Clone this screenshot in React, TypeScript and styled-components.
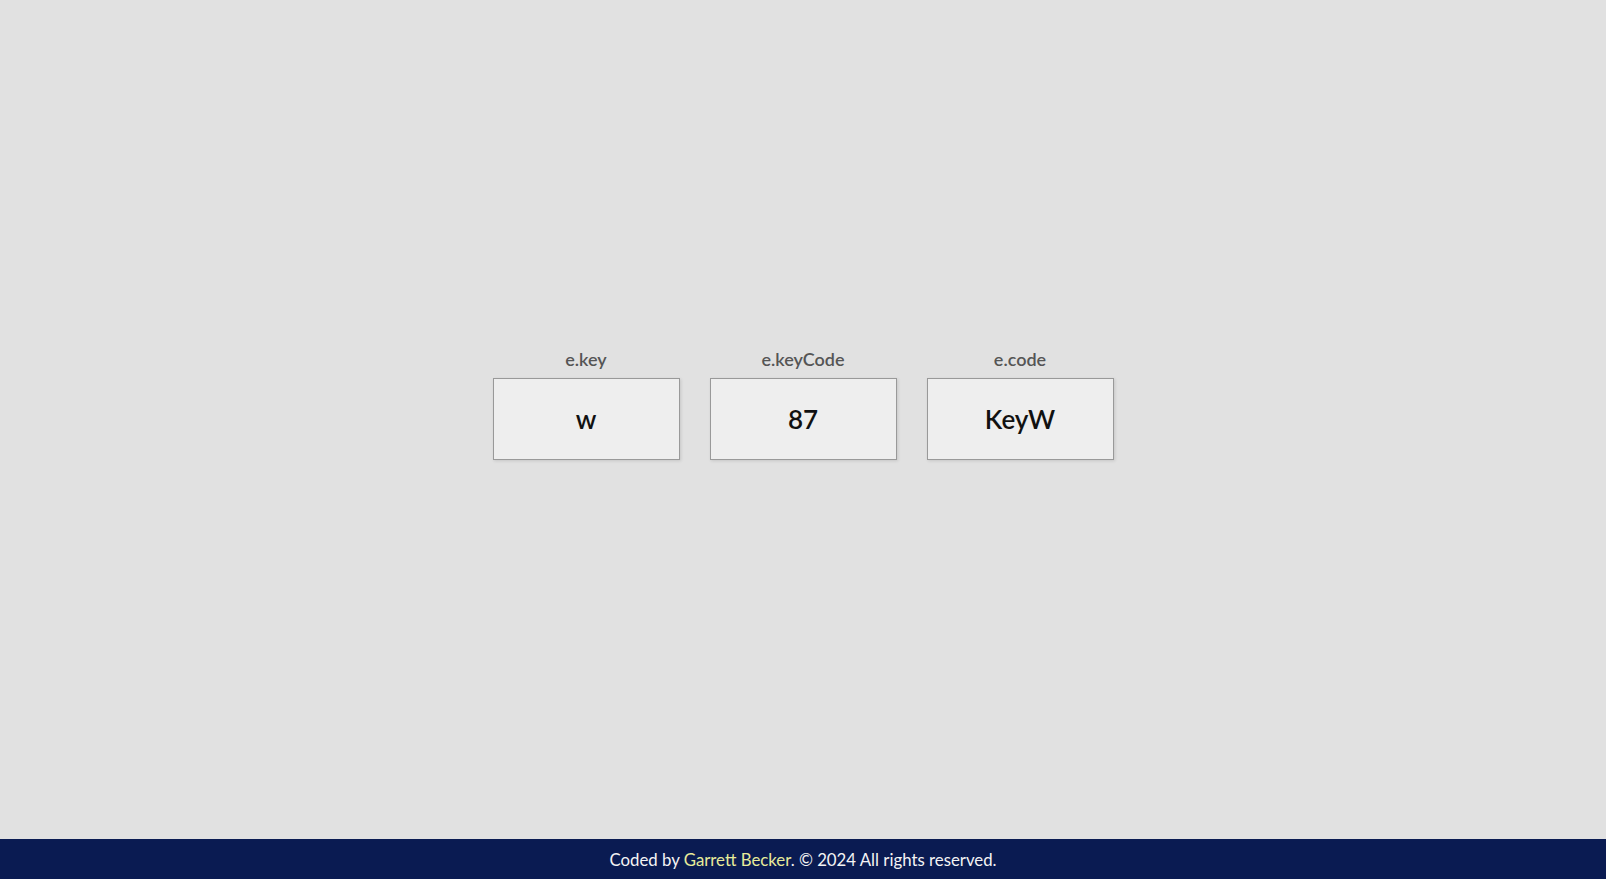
import React from "react";
import styled, { createGlobalStyle } from "styled-components";

const GlobalStyle = createGlobalStyle`
  html, body { margin: 0; padding: 0; height: 100%; }
  body {
    background: #e1e1e1;
    font-family: "Lato", "Noto Sans", sans-serif;
  }
  #root { height: 100%; }
`;

const Page = styled.div`
  display: flex;
  flex-direction: column;
  height: 100vh;
`;

const Main = styled.main`
  flex: 1;
  display: flex;
  align-items: center;
  justify-content: center;
  padding-bottom: 31px;
`;

const Row = styled.div`
  display: flex;
  gap: 30px;
`;

const Column = styled.div`
  display: flex;
  flex-direction: column;
  align-items: center;
  gap: 8px;
`;

const Label = styled.div`
  font-size: 18px;
  font-weight: 600;
  color: #555;
  line-height: 22px;
`;

const Box = styled.div`
  width: 185px;
  height: 80px;
  box-sizing: content-box;
  border: 1px solid #999;
  background: #eeeeee;
  box-shadow: 1px 1px 3px rgba(0, 0, 0, 0.12);
  display: flex;
  align-items: center;
  justify-content: center;
  font-size: 26px;
  font-weight: 600;
  color: #111;
`;

const Footer = styled.footer`
  height: 40px;
  background: #0a1b52;
  color: #f4f4f4;
  display: flex;
  align-items: center;
  justify-content: center;
  font-size: 16.8px;
`;

const Link = styled.a`
  color: #e8ec9a;
  text-decoration: none;
`;

const items = [
  { label: "e.key", value: "w" },
  { label: "e.keyCode", value: "87" },
  { label: "e.code", value: "KeyW" },
];

export default function App() {
  return (
    <>
      <GlobalStyle />
      <Page>
        <Main>
          <Row>
            {items.map((it) => (
              <Column key={it.label}>
                <Label>{it.label}</Label>
                <Box>{it.value}</Box>
              </Column>
            ))}
          </Row>
        </Main>
        <Footer>
          <span>
            Coded by <Link href="#">Garrett Becker</Link>. © 2024 All rights reserved.
          </span>
        </Footer>
      </Page>
    </>
  );
}
